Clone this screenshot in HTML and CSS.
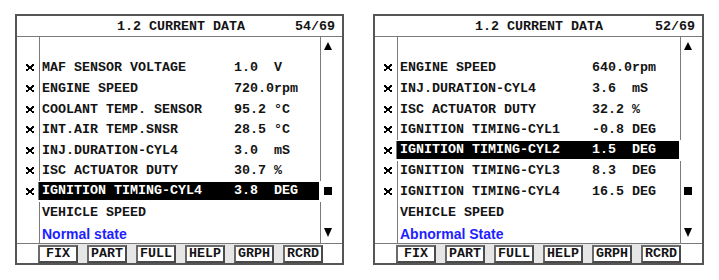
FILE: index.html
```html
<!DOCTYPE html>
<html lang="en">
<head>
    <meta charset="UTF-8">
    <title>Current Data</title>
    <link rel="stylesheet" href="styles.css">
</head>
<body>
    <div class="screens">
        <!-- Normal state screen -->
        <div class="panel">
            <div class="panel-head">
                <span class="title">1.2 CURRENT DATA</span>
                <span class="count">54/69</span>
            </div>
            <div class="data-grid">
                <div class="mark"></div><div class="item"></div><div class="scroll top"><svg width="8" height="8" viewBox="0 0 8 8"><path d="M4 0 L8 8 L0 8 Z"/></svg></div>
                <div class="mark on"></div><div class="item"><span class="name">MAF SENSOR VOLTAGE</span><span class="value">1.0  V</span></div><div class="scroll"></div>
                <div class="mark on"></div><div class="item"><span class="name">ENGINE SPEED</span><span class="value">720.0rpm</span></div><div class="scroll"></div>
                <div class="mark on"></div><div class="item"><span class="name">COOLANT TEMP. SENSOR</span><span class="value">95.2 °C</span></div><div class="scroll"></div>
                <div class="mark on"></div><div class="item"><span class="name">INT.AIR TEMP.SNSR</span><span class="value">28.5 °C</span></div><div class="scroll"></div>
                <div class="mark on"></div><div class="item"><span class="name">INJ.DURATION-CYL4</span><span class="value">3.0  mS</span></div><div class="scroll"></div>
                <div class="mark on"></div><div class="item"><span class="name">ISC ACTUATOR DUTY</span><span class="value">30.7 %</span></div><div class="scroll"></div>
                <div class="mark on"></div><div class="item selected"><span class="name">IGNITION TIMING-CYL4</span><span class="value">3.8  DEG</span></div><div class="scroll"><svg width="8" height="8" viewBox="0 0 8 8"><rect width="8" height="8"/></svg></div>
                <div class="mark"></div><div class="item"><span class="name">VEHICLE SPEED</span></div><div class="scroll"></div>
                <div class="mark"></div><div class="item"><span class="state">Normal state</span></div><div class="scroll"><svg width="8" height="9" viewBox="0 0 8 9"><path d="M0 0 L8 0 L4 9 Z"/></svg></div>
            </div>
            <div class="panel-foot">
                <button class="fkey">FIX</button>
                <button class="fkey">PART</button>
                <button class="fkey">FULL</button>
                <button class="fkey">HELP</button>
                <button class="fkey">GRPH</button>
                <button class="fkey">RCRD</button>
            </div>
        </div>

        <!-- Abnormal state screen -->
        <div class="panel wide">
            <div class="panel-head">
                <span class="title">1.2 CURRENT DATA</span>
                <span class="count">52/69</span>
            </div>
            <div class="data-grid">
                <div class="mark"></div><div class="item"></div><div class="scroll top"><svg width="8" height="8" viewBox="0 0 8 8"><path d="M4 0 L8 8 L0 8 Z"/></svg></div>
                <div class="mark on"></div><div class="item"><span class="name">ENGINE SPEED</span><span class="value">640.0rpm</span></div><div class="scroll"></div>
                <div class="mark on"></div><div class="item"><span class="name">INJ.DURATION-CYL4</span><span class="value">3.6  mS</span></div><div class="scroll"></div>
                <div class="mark on"></div><div class="item"><span class="name">ISC ACTUATOR DUTY</span><span class="value">32.2 %</span></div><div class="scroll"></div>
                <div class="mark on"></div><div class="item"><span class="name">IGNITION TIMING-CYL1</span><span class="value">-0.8 DEG</span></div><div class="scroll"></div>
                <div class="mark on"></div><div class="item selected"><span class="name">IGNITION TIMING-CYL2</span><span class="value">1.5  DEG</span></div><div class="scroll"></div>
                <div class="mark on"></div><div class="item"><span class="name">IGNITION TIMING-CYL3</span><span class="value">8.3  DEG</span></div><div class="scroll"></div>
                <div class="mark on"></div><div class="item"><span class="name">IGNITION TIMING-CYL4</span><span class="value">16.5 DEG</span></div><div class="scroll"><svg width="8" height="8" viewBox="0 0 8 8"><rect width="8" height="8"/></svg></div>
                <div class="mark"></div><div class="item"><span class="name">VEHICLE SPEED</span></div><div class="scroll"></div>
                <div class="mark"></div><div class="item"><span class="state">Abnormal State</span></div><div class="scroll"><svg width="8" height="9" viewBox="0 0 8 9"><path d="M0 0 L8 0 L4 9 Z"/></svg></div>
            </div>
            <div class="panel-foot">
                <button class="fkey">FIX</button>
                <button class="fkey">PART</button>
                <button class="fkey">FULL</button>
                <button class="fkey">HELP</button>
                <button class="fkey">GRPH</button>
                <button class="fkey">RCRD</button>
            </div>
        </div>
    </div>
</body>
</html>
```

FILE: styles.css
```css
:root {
    --ink: #141414;
    --frame: #555;
    --rule: #7a7a7a;
    --state: #1e1eff;
}

/* Base */
body {
    margin: 0;
    background: #fff;
    color: var(--ink);
    font-family: "Liberation Mono", "Courier New", monospace;
    font-size: 13.33px;
    font-weight: bold;
}

.screens {
    display: flex;
    gap: 29px;
    padding: 14px 0 0 15px;
}

/* Scan tool screen */
.panel {
    width: 329px;
    box-sizing: border-box;
    border: 2px solid var(--frame);
    background: #fff;
}

.panel.wide {
    width: 331px;
}

.panel-head {
    display: flex;
    align-items: center;
    height: 20px;
    padding: 0 7px 0 100px;
    border-bottom: 1px solid var(--rule);
}

.count {
    margin-left: auto;
}

/* Data list */
.data-grid {
    display: grid;
    grid-template-columns: 22px 1fr 21px;
    grid-template-rows: repeat(10, 20.6px);
}

.mark {
    display: flex;
    align-items: center;
    justify-content: center;
    padding-left: 3px;
}

/* selection cross of the tool's bitmap font */
.mark.on::before {
    content: "";
    width: 8px;
    height: 7px;
    background:
        linear-gradient(to right, #000 0 2px, transparent 2px 6px, #000 6px) top / 8px 1px no-repeat,
        linear-gradient(to right, #000 0 2px, transparent 2px 6px, #000 6px) bottom / 8px 1px no-repeat,
        linear-gradient(to bottom right, transparent 42%, #000 42% 60%, transparent 60%),
        linear-gradient(to bottom left, transparent 42%, #000 42% 60%, transparent 60%);
}

.item {
    display: flex;
    align-items: center;
    padding-left: 2px;
    border-left: 1px solid var(--rule);
    border-right: 1px solid var(--rule);
    white-space: pre;
}

.item .name {
    width: 192px;
}

.item.selected {
    background: #000;
    color: #fff;
    margin: 1px 2px 2px 0;
    border-color: #000;
    box-shadow: -1px 0 0 var(--rule);
}

.state {
    color: var(--state);
    font-family: "Liberation Sans", Arial, sans-serif;
    font-size: 14px;
    padding-top: 2px;
}

.scroll {
    display: flex;
    align-items: center;
    padding-left: 3px;
}

.scroll.top {
    align-items: flex-start;
    padding-top: 5px;
}

.scroll svg {
    fill: #000;
}

/* Function keys */
.panel-foot {
    display: flex;
    gap: 9px;
    height: 19px;
    padding-left: 21px;
    border-top: 1px solid var(--rule);
    background: linear-gradient(to right, #fff 21px, #e6e6e6 21px, #e6e6e6 304px, #fff 304px);
}

.fkey {
    width: 40px;
    height: 18px;
    margin: 1px 0 0;
    padding: 0;
    box-sizing: border-box;
    border: 2px solid #4a4a4a;
    border-top-color: #6a6a6a;
    border-left-color: #6a6a6a;
    background: #fff;
    color: var(--ink);
    font-family: "Liberation Mono", "Courier New", monospace;
    font-size: 13.33px;
    font-weight: bold;
    line-height: 14px;
}
```
